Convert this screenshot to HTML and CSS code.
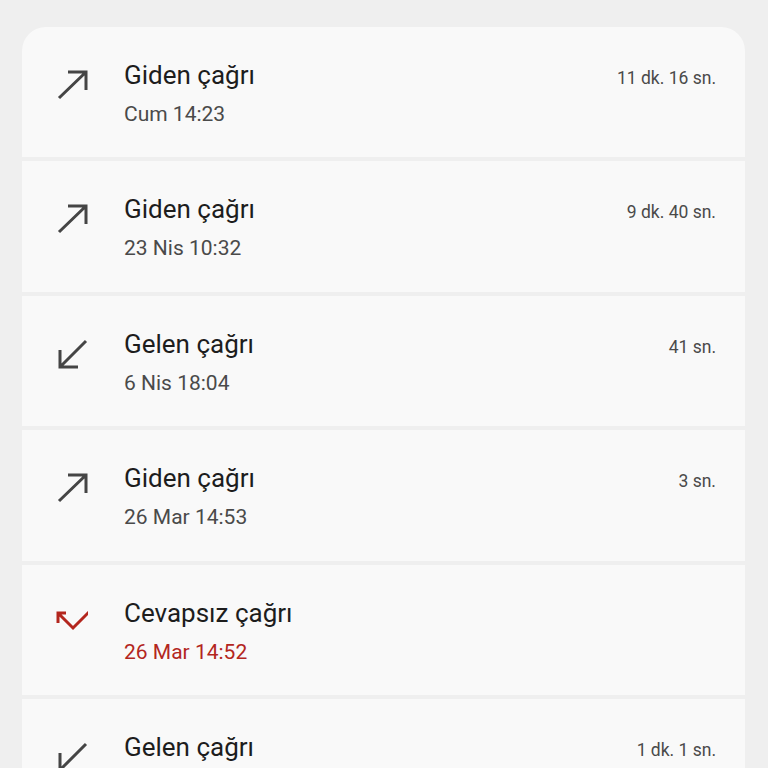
FILE: index.html
```html
<!DOCTYPE html>
<html>
  <head>
    <title>Arama geçmişi</title>
    <link rel="stylesheet" href="styles.css">
  </head>
  <body>
    <ul class="calls">
      <li class="call">
        <svg class="icon" viewBox="0 0 32 32"><path d="M3 29L30 3M12 3H30V21" /></svg>
        <div class="info">
          <div class="title">Giden çağrı</div>
          <div class="time">Cum 14:23</div>
        </div>
        <div class="duration">11 dk. 16 sn.</div>
      </li>
      <li class="call">
        <svg class="icon" viewBox="0 0 32 32"><path d="M3 29L30 3M12 3H30V21" /></svg>
        <div class="info">
          <div class="title">Giden çağrı</div>
          <div class="time">23 Nis 10:32</div>
        </div>
        <div class="duration">9 dk. 40 sn.</div>
      </li>
      <li class="call">
        <svg class="icon" viewBox="0 0 32 32"><path d="M30 3L4 29M4 12V29H22" /></svg>
        <div class="info">
          <div class="title">Gelen çağrı</div>
          <div class="time">6 Nis 18:04</div>
        </div>
        <div class="duration">41 sn.</div>
      </li>
      <li class="call">
        <svg class="icon" viewBox="0 0 32 32"><path d="M3 29L30 3M12 3H30V21" /></svg>
        <div class="info">
          <div class="title">Giden çağrı</div>
          <div class="time">26 Mar 14:53</div>
        </div>
        <div class="duration">3 sn.</div>
      </li>
      <li class="call missed">
        <svg class="icon" viewBox="0 0 32 32"><path d="M2 6L17 21L33 5M10 6H2V16" /></svg>
        <div class="info">
          <div class="title">Cevapsız çağrı</div>
          <div class="time">26 Mar 14:52</div>
        </div>
        <div class="duration"></div>
      </li>
      <li class="call">
        <svg class="icon" viewBox="0 0 32 32"><path d="M30 3L4 29M4 12V29H22" /></svg>
        <div class="info">
          <div class="title">Gelen çağrı</div>
        </div>
        <div class="duration">1 dk. 1 sn.</div>
      </li>
    </ul>
  </body>
</html>
```

FILE: styles.css
```css
body {
  margin: 0;
  background-color: #efefef;
  font-family: Roboto, "Noto Sans", sans-serif;
  overflow: hidden;
}

.calls {
  list-style-type: none;
  margin: 27px 23px 0 22px;
  padding: 0;
  display: flex;
  flex-direction: column;
  gap: 4px;
}

.call {
  display: flex;
  align-items: flex-start;
  height: 130.4px;
  box-sizing: border-box;
  padding: 30px 29px 0 34px;
  background-color: #f9f9f9;
}

.call:first-child {
  border-radius: 24px 24px 0 0;
}

.icon {
  width: 32px;
  height: 32px;
  margin-top: 12px;
  margin-right: 36px;
  fill: none;
  stroke: #454545;
  stroke-width: 3;
  flex-shrink: 0;
}

.info {
  flex: 1;
}

.title {
  font-size: 26px;
  line-height: 36px;
  color: #1d1d1d;
}

.time {
  margin-top: 5px;
  font-size: 21px;
  line-height: 32px;
  color: #4a4a4a;
}

.duration {
  margin-top: 3px;
  font-size: 17.5px;
  line-height: 36px;
  color: #4a4a4a;
}

.missed .icon {
  stroke: #b3261e;
}

.missed .time {
  color: #b3261e;
}
```
